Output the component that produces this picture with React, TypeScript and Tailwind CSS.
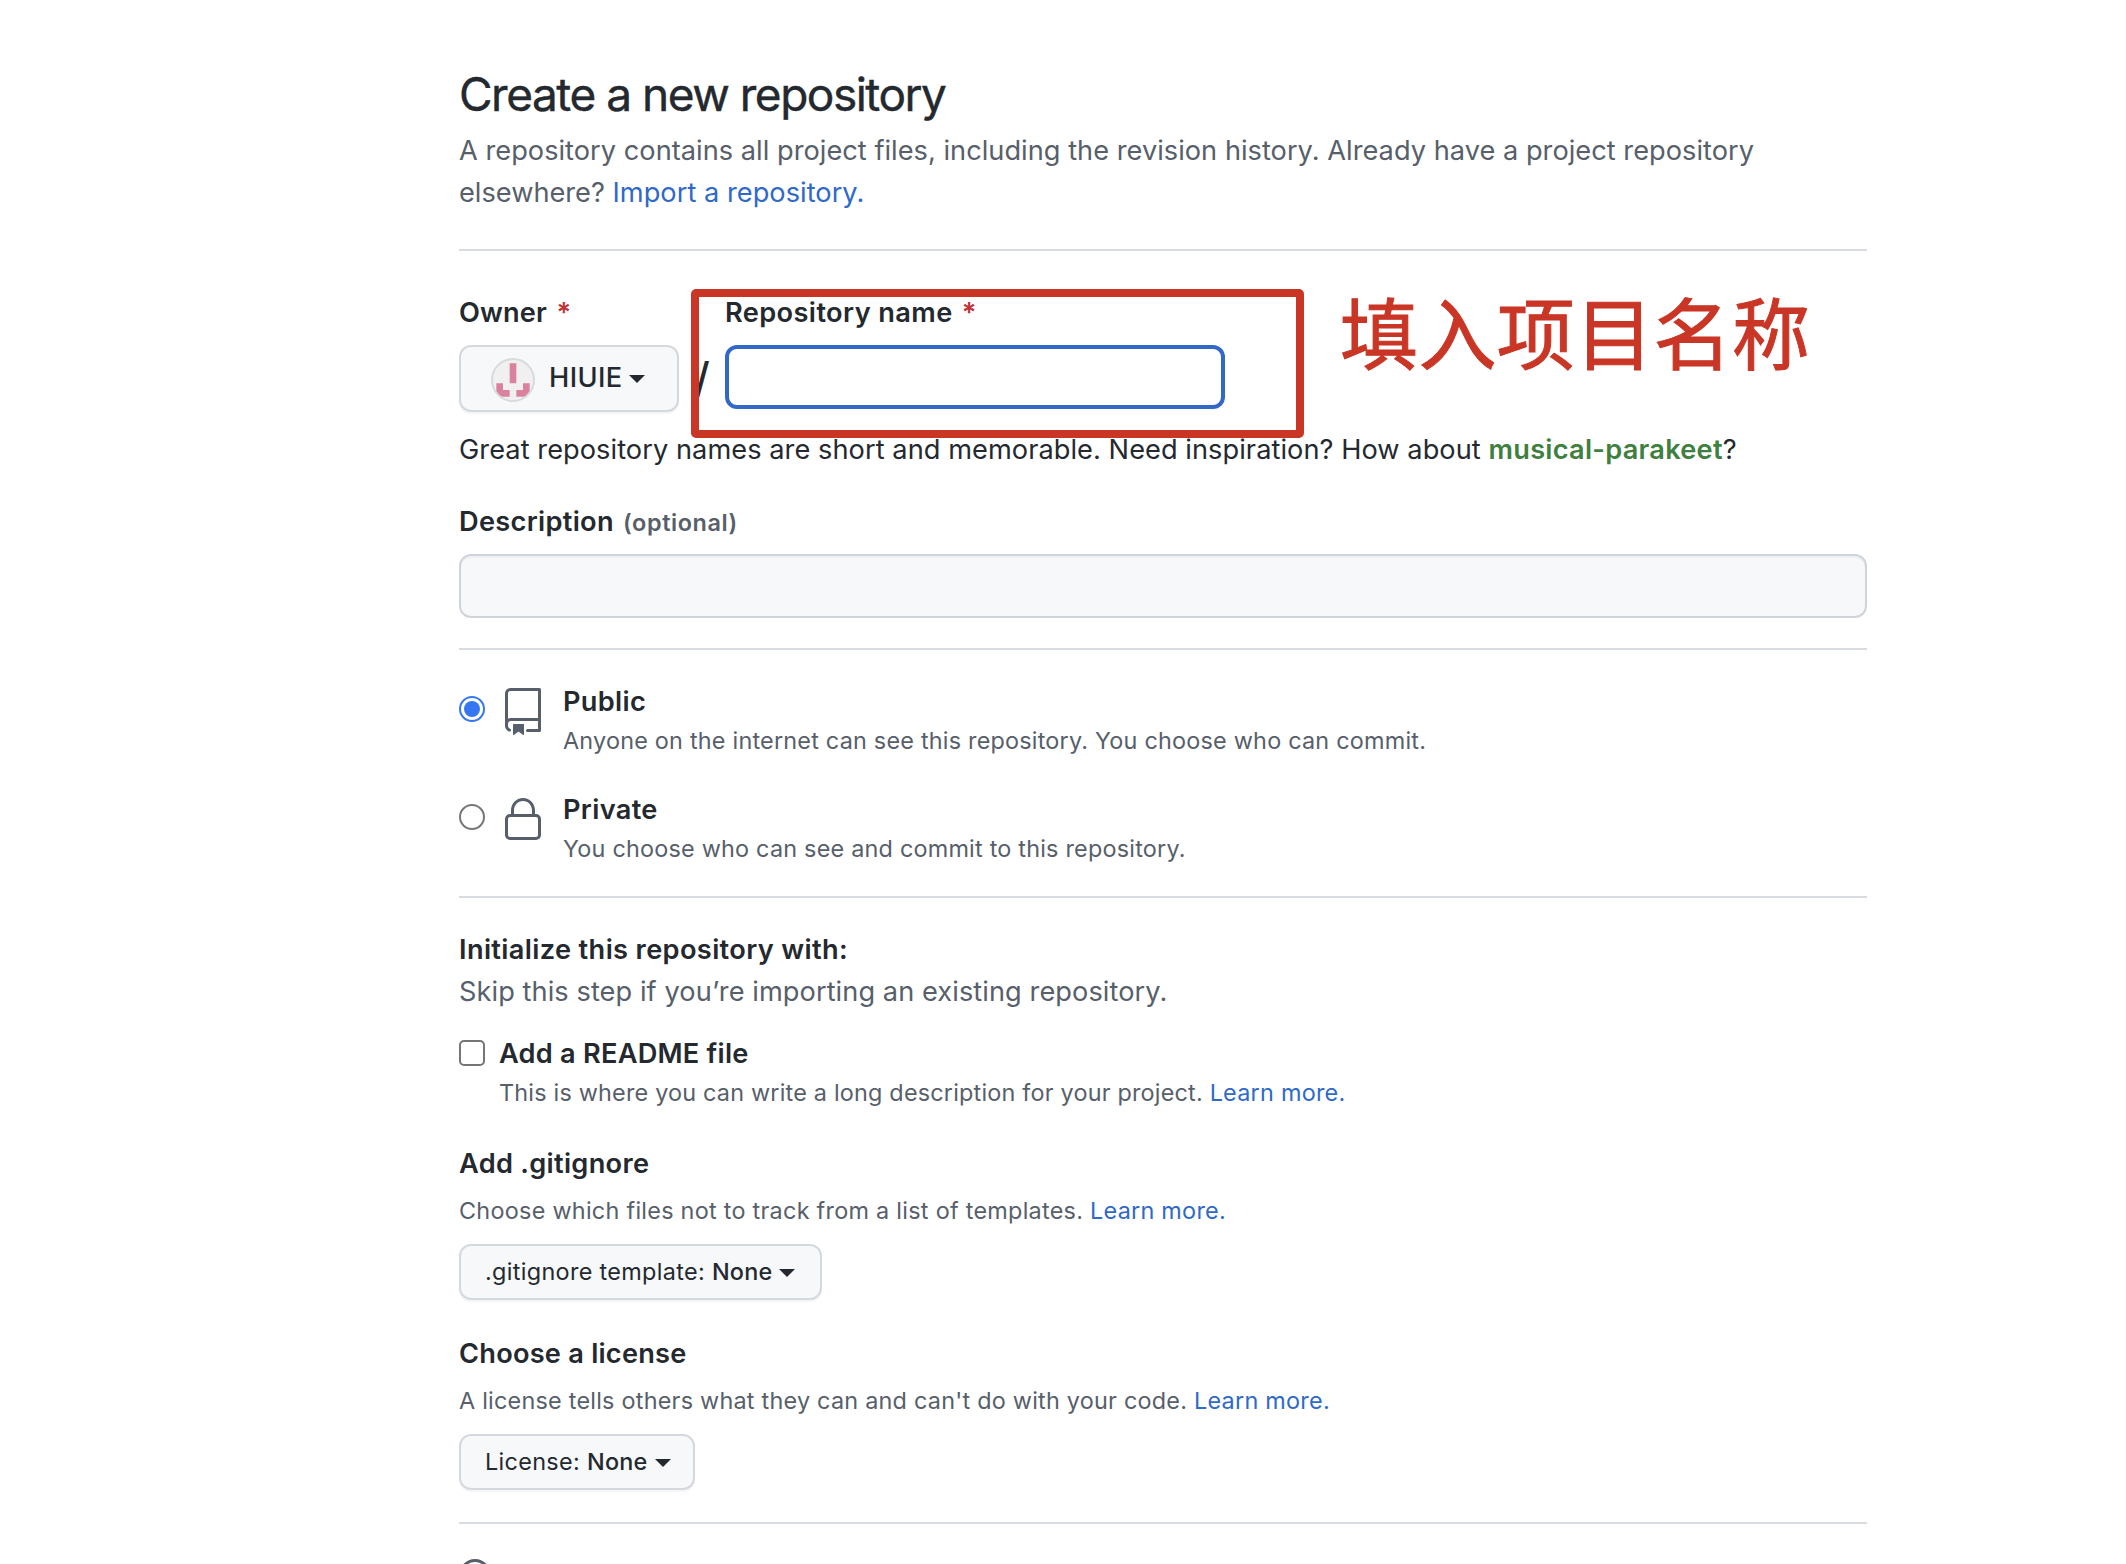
import type { ReactNode } from 'react'

const bodyText = 'text-[27.2px] leading-[42px]'
const smallText = 'text-[23.4px] leading-[36px] text-[#57606a]'
const headText = 'text-[27.2px] leading-[42px] font-semibold'

function Caret({ className = '' }: { className?: string }) {
  return (
    <svg viewBox="0 0 16 8" className={`h-2 w-4 shrink-0 ${className}`} fill="#24292f">
      <path d="M0 0h16L8 8z" />
    </svg>
  )
}

function Divider({ className = '' }: { className?: string }) {
  return <hr className={`h-0.5 border-0 bg-[#d8dce1] ${className}`} />
}

function LearnMore() {
  return <a className="tracking-[0.25px] text-[#2f69c9]">Learn more.</a>
}

function Avatar() {
  return (
    <span className="mt-0.5 size-11 shrink-0 overflow-hidden rounded-full border-2 border-[#d8dadd] bg-[#f0f0f0]">
      <svg viewBox="0 0 6 6" className="size-10" fill="#d9819d">
        <path d="M2.5 .5h1v3h-1zM.5 3.5h1v1h1v1h-2zM5.5 3.5h-1v1h-1v1h2z" />
      </svg>
    </span>
  )
}

function RepoIcon() {
  return (
    <svg viewBox="0 0 24 24" className="size-12" fill="#57606a" fillRule="evenodd">
      <path d="M3 2.75A2.75 2.75 0 015.75 0h14.5a.75.75 0 01.75.75v20.5a.75.75 0 01-.75.75h-6a.75.75 0 010-1.5h5.25v-4H6A1.5 1.5 0 004.5 18v.75c0 .716.43 1.334 1.05 1.605a.75.75 0 01-.6 1.374A3.25 3.25 0 013 18.75v-16zM19.5 1.5V15H6c-.546 0-1.059.146-1.5.401V2.75c0-.69.56-1.25 1.25-1.25H19.5z" />
      <path d="M7 18.25a.25.25 0 01.25-.25h5a.25.25 0 01.25.25v5.01a.25.25 0 01-.397.201l-2.206-1.604a.25.25 0 00-.294 0L7.397 23.46a.25.25 0 01-.397-.2v-5.01z" />
    </svg>
  )
}

function LockIcon() {
  return (
    <svg viewBox="0 0 24 24" className="size-12" fill="#57606a" fillRule="evenodd">
      <path d="M6 9V7.25C6 3.845 8.503 1 12 1s6 2.845 6 6.25V9h.5a2.5 2.5 0 012.5 2.5v8a2.5 2.5 0 01-2.5 2.5h-13A2.5 2.5 0 013 19.5v-8A2.5 2.5 0 015.5 9H6zm-1.5 2.5a1 1 0 011-1h13a1 1 0 011 1v8a1 1 0 01-1 1h-13a1 1 0 01-1-1v-8zm3-4.25V9h9V7.25c0-2.67-1.922-4.75-4.5-4.75-2.578 0-4.5 2.08-4.5 4.75z" />
    </svg>
  )
}

function Radio({ checked = false }: { checked?: boolean }) {
  return checked ? (
    <span className="mt-4 flex size-[26px] shrink-0 items-center justify-center rounded-full border-2 border-[#3577f1] bg-white">
      <span className="size-4 rounded-full bg-[#3577f1]" />
    </span>
  ) : (
    <span className="mt-4 size-[26px] shrink-0 rounded-full border-2 border-[#767676] bg-white" />
  )
}

function Visibility({
  checked,
  icon,
  title,
  note,
  className = '',
}: {
  checked?: boolean
  icon: ReactNode
  title: string
  note: string
  className?: string
}) {
  return (
    <div className={`flex h-[79px] items-start ${className}`}>
      <Radio checked={checked} />
      <span className="ml-3.5 mt-2">{icon}</span>
      <div className="ml-4 mt-px whitespace-nowrap">
        <div className={`${headText} tracking-[0.32px]`}>{title}</div>
        <p className={`${smallText} tracking-[0.215px]`}>{note}</p>
      </div>
    </div>
  )
}

function SelectButton({ label, className = '' }: { label: string; className?: string }) {
  return (
    <button
      className={`flex h-14 items-center whitespace-nowrap rounded-xl border-2 border-[#d5d8dc] bg-[#f6f8fa] pl-6 text-[23.4px] leading-9 shadow-[0_2px_0_rgba(27,31,36,0.04)] ${className}`}
    >
      <span className="tracking-[0.33px]">{label}</span>
      <span className="ml-[7px] font-medium tracking-[0.2px]">None</span>
      <Caret className="ml-[7px] mt-px" />
    </button>
  )
}

export default function App() {
  return (
    <div className="h-[1564px] w-[2126px] overflow-hidden bg-white pl-[459px] pt-[59px] font-['Inter','Noto_Sans_CJK_SC',sans-serif] text-[#24292f]">
      <main className="w-[1408px]">
        <h1 className="text-[46px] leading-[71px] tracking-[-1.49px] [-webkit-text-stroke:0.4px]">
          Create a new repository
        </h1>
        <p className={`${bodyText} whitespace-nowrap text-[#57606a]`}>
          <span className="tracking-[0.024px]">
            A repository contains all project files, including the revision history. Already have a project repository
          </span>
          <br />
          elsewhere? <a className="tracking-[0.03px] text-[#2f69c9]">Import a repository.</a>
        </p>
        <Divider className="mt-[35px]" />

        <section className="relative mt-[41px]">
          <div className="flex">
            <div>
              <div className={`${headText} tracking-[0.15px]`}>
                Owner<span className="ml-[9.5px] text-[#bf3236]">*</span>
              </div>
              <button className="mt-[11px] flex h-[67px] w-[220px] items-center rounded-xl border-2 border-[#d5d8dc] bg-[#f6f8fa] pl-[30px] shadow-[0_2px_0_rgba(27,31,36,0.04)]">
                <Avatar />
                <span className="-mt-px ml-3.5 text-[27.2px] font-medium leading-[42px] tracking-[0.4px]">HIUIE</span>
                <Caret className="ml-[6px]" />
              </button>
            </div>
            <span className="mt-[61px] flex w-[46px] justify-center text-[42px] leading-[50px] font-medium">/</span>
            <div>
              <div className={`${headText} whitespace-nowrap tracking-[0.39px]`}>
                Repository name<span className="ml-[9px] text-[#bf3236]">*</span>
              </div>
              <div className="mt-[11px] h-16 w-[500px] rounded-xl border-4 border-[#3268c8] bg-white" />
            </div>
          </div>
          <p className={`mt-[17px] ${bodyText} whitespace-nowrap`}>
            <span className="tracking-[0.055px]">
              Great repository names are short and memorable. Need inspiration? How about{' '}
            </span>
            <b className="font-semibold tracking-[0.25px] text-[#3f7f40]">musical-parakeet</b>?
          </p>
          <div className="absolute left-[232px] top-[-3px] h-[149px] w-[613px] rounded-[5px] border-8 border-[#c93626]" />
          <div className="absolute left-[881px] top-[-19px] whitespace-nowrap font-['Noto_Sans_CJK_SC',sans-serif] text-[78px] leading-[115px] tracking-[0.4px] text-[#c93626] [-webkit-text-stroke:1px]">
            填入项目名称
          </div>
        </section>

        <section className="mt-[30px]">
          <div className={`flex items-baseline ${headText} h-[42px] tracking-[0.31px]`}>
            Description
            <span className="ml-[9px] text-[23.4px] tracking-[0.6px] text-[#57606a]">(optional)</span>
          </div>
          <div className="mt-[11px] h-16 rounded-xl border-2 border-[#d0d4d9] bg-[#f6f8fa] shadow-[inset_0_2px_0_rgba(208,215,222,0.2)]" />
        </section>
        <Divider className="mt-[30px]" />

        <Visibility
          checked
          className="mt-[30px]"
          icon={<RepoIcon />}
          title="Public"
          note="Anyone on the internet can see this repository. You choose who can commit."
        />
        <Visibility
          className="mt-[29px]"
          icon={<LockIcon />}
          title="Private"
          note="You choose who can see and commit to this repository."
        />
        <Divider className="mt-[29px]" />

        <section className="mt-[31px]">
          <div className={`${headText} tracking-[0.36px]`}>Initialize this repository with:</div>
          <p className={`${bodyText} tracking-[0.07px] text-[#57606a]`}>
            Skip this step if you’re importing an existing repository.
          </p>
          <div className="mt-5 flex items-start">
            <span className="mt-[7px] size-[26px] rounded-[5px] border-2 border-[#767676] bg-white" />
            <div className="ml-3.5 whitespace-nowrap">
              <div className={`${headText} tracking-[0.23px]`}>Add a README file</div>
              <p className={`${smallText} tracking-[0.2px]`}>
                This is where you can write a long description for your project. <LearnMore />
              </p>
            </div>
          </div>
        </section>

        <section className="mt-8">
          <div className={`${headText} tracking-[0.3px]`}>Add .gitignore</div>
          <p className={`mt-2 ${smallText} tracking-[0.27px]`}>
            Choose which files not to track from a list of templates. <LearnMore />
          </p>
          <SelectButton label=".gitignore template:" className="mt-[15px] w-[363px]" />
        </section>

        <section className="mt-[33px]">
          <div className={`${headText} tracking-[0.23px]`}>Choose a license</div>
          <p className={`mt-2 ${smallText} tracking-[0.235px]`}>
            A license tells others what they can and can't do with your code. <LearnMore />
          </p>
          <SelectButton label="License:" className="mt-[15px] w-[236px]" />
        </section>
        <Divider className="mt-8" />

        <svg viewBox="0 0 16 16" className="mt-[35px] size-8" fill="none" stroke="#57606a" strokeWidth="1.5">
          <circle cx="8" cy="8" r="7.25" />
          <path d="M6.5 7.5h1.75v3.75M6 11.25h4M8 5v.1" />
        </svg>
      </main>
    </div>
  )
}
